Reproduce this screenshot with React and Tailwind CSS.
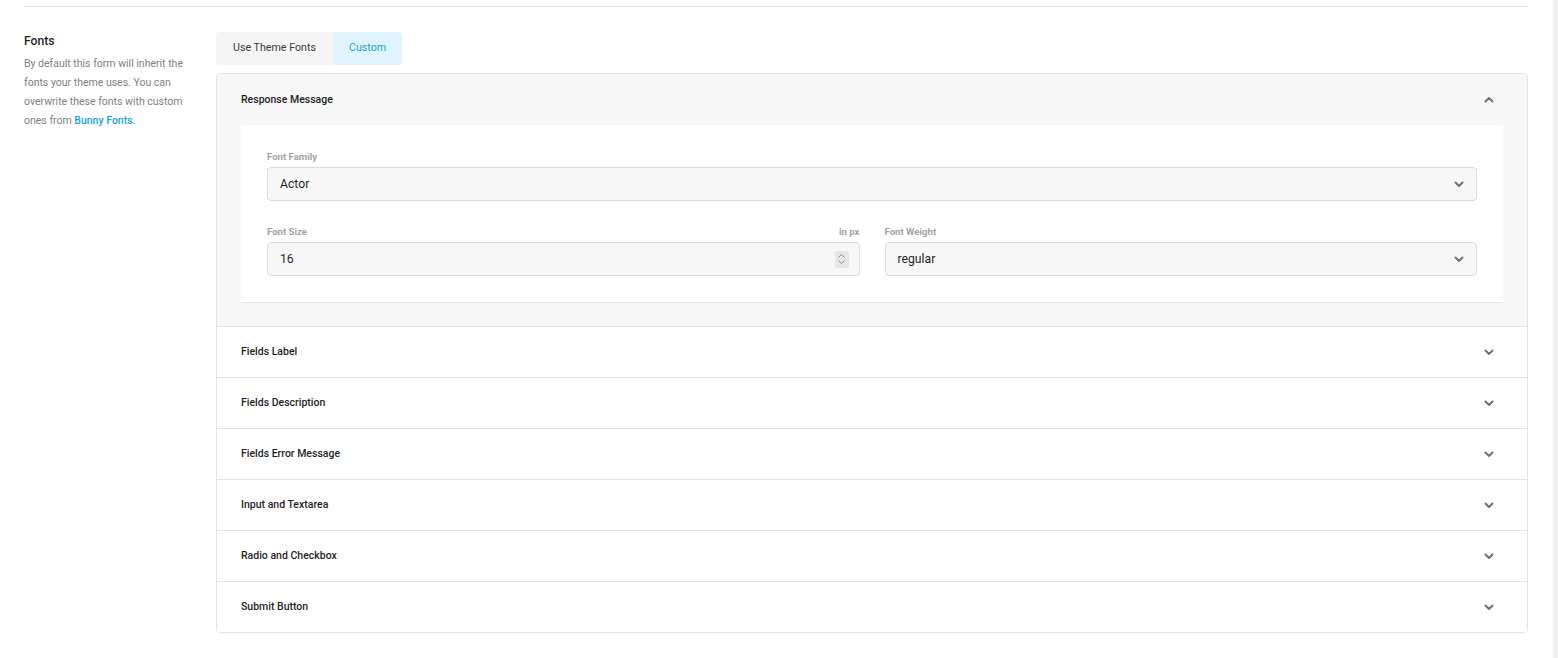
import React, { useState } from 'react';

const Chevron = ({ up = false, className = '' }) => (
    <svg
        width="10"
        height="7"
        viewBox="0 0 10 7"
        className={className}
        fill="none"
        stroke="currentColor"
        strokeWidth="2"
        strokeLinecap="round"
        strokeLinejoin="round"
    >
        {up ? <path d="M1.5 5.5 L5 2 L8.5 5.5" /> : <path d="M1.5 1.5 L5 5 L8.5 1.5" />}
    </svg>
);

const SECTIONS = [
    'Response Message',
    'Fields Label',
    'Fields Description',
    'Fields Error Message',
    'Input and Textarea',
    'Radio and Checkbox',
    'Submit Button',
];

function FieldLabel({ children, hint }) {
    return (
        <div className="flex items-center justify-between h-[12px] mb-[4px] text-[9.6px] font-bold text-[#a3a3a3]">
            <span>{children}</span>
            {hint && <span>{hint}</span>}
        </div>
    );
}

function SelectBox({ value }) {
    return (
        <div className="flex items-center justify-between h-[34px] pl-3 pr-[12px] bg-[#f7f7f7] border border-[#dcdcdc] rounded-[4px] text-[12.2px] text-[#1f1f1f]">
            <span>{value}</span>
            <Chevron className="text-[#6b7280]" />
        </div>
    );
}

function NumberBox({ value }) {
    return (
        <div className="flex items-center justify-between h-[34px] px-3 bg-[#f7f7f7] border border-[#dcdcdc] rounded-[4px] text-[12.2px] text-[#1f1f1f]">
            <span>{value}</span>
            <div className="flex flex-col items-center justify-center gap-[2px] w-[14px] h-[17px] bg-[#e6e6e6] rounded-[2px] -mr-[2px]">
                <svg width="7" height="4" viewBox="0 0 7 4" fill="none" stroke="#8a8a8a" strokeWidth="1">
                    <path d="M0.5 3.5 L3.5 0.5 L6.5 3.5" />
                </svg>
                <svg width="7" height="4" viewBox="0 0 7 4" fill="none" stroke="#8a8a8a" strokeWidth="1">
                    <path d="M0.5 0.5 L3.5 3.5 L6.5 0.5" />
                </svg>
            </div>
        </div>
    );
}

function ResponseMessageBody() {
    return (
        <div className="px-[24px] pb-[24px]">
            <div className="bg-white px-[26px] pt-[26px] pb-[26px] shadow-[0_1px_0_#e8e8e8]">
                <FieldLabel>Font Family</FieldLabel>
                <SelectBox value="Actor" />
                <div className="grid grid-cols-2 gap-[25px] mt-[25px]">
                    <div>
                        <FieldLabel hint="in px">Font Size</FieldLabel>
                        <NumberBox value="16" />
                    </div>
                    <div>
                        <FieldLabel>Font Weight</FieldLabel>
                        <SelectBox value="regular" />
                    </div>
                </div>
            </div>
        </div>
    );
}

export default function App() {
    const [open, setOpen] = useState(0);
    const [mode, setMode] = useState('custom');

    return (
        <div
            className="flex w-full min-h-[658px] bg-white text-[#1f1f1f]"
            style={{ fontFamily: 'Roboto, "Liberation Sans", sans-serif' }}
        >
            <div className="flex-1 pl-6 pr-[25px]">
                <div className="mt-[6px] border-t border-[#e6e6e6]" />

                <div className="flex pt-[25px]">
                    {/* Left: section description */}
                    <div className="w-[192px] shrink-0">
                        <h3 className="text-[12.2px] font-medium leading-[18px] text-[#1f1f1f]">Fonts</h3>
                        <p className="mt-[4px] pr-[24px] text-[10.5px] leading-[19px] text-[#808080]">
                            By default this form will inherit the fonts your theme uses. You can overwrite
                            these fonts with custom ones from{' '}
                            <a className="text-[#1aa1e0] font-medium">Bunny Fonts</a>.
                        </p>
                    </div>

                    {/* Right: tabs + accordion */}
                    <div className="flex-1">
                        <div className="flex h-[33px] w-fit rounded-[4px] overflow-hidden text-[10.7px]">
                            <button
                                onClick={() => setMode('theme')}
                                className={`px-[17px] ${mode === 'theme' ? 'bg-[#e1f4fd] text-[#1aa1e0]' : 'bg-[#f5f5f5] text-[#3a3a3a]'}`}
                            >
                                Use Theme Fonts
                            </button>
                            <button
                                onClick={() => setMode('custom')}
                                className={`px-[16px] ${mode === 'custom' ? 'bg-[#e1f4fd] text-[#1aa1e0]' : 'bg-[#f5f5f5] text-[#3a3a3a]'}`}
                            >
                                Custom
                            </button>
                        </div>

                        <div className="mt-2 border border-[#e3e3e3] rounded-[4px] overflow-hidden">
                            {SECTIONS.map((name, i) => (
                                <div
                                    key={name}
                                    className={`${i > 0 ? 'border-t border-[#e3e3e3]' : ''} ${open === i ? 'bg-[#f7f7f7]' : 'bg-white'}`}
                                >
                                    <button
                                        onClick={() => setOpen(open === i ? -1 : i)}
                                        className={`flex w-full items-center justify-between ${i === 0 ? 'h-[51px]' : 'h-[50px]'} pl-[24px] pr-[33px] text-left`}
                                    >
                                        <span className="text-[10.5px] font-medium text-[#1f1f1f]">{name}</span>
                                        <Chevron up={open === i} className="text-[#6b7280]" />
                                    </button>
                                    {open === i && i === 0 && <ResponseMessageBody />}
                                </div>
                            ))}
                        </div>
                    </div>
                </div>
            </div>

            {/* scrollbar track */}
            <div className="w-[5px] shrink-0 bg-[#f0f0f0]" />
        </div>
    );
}
